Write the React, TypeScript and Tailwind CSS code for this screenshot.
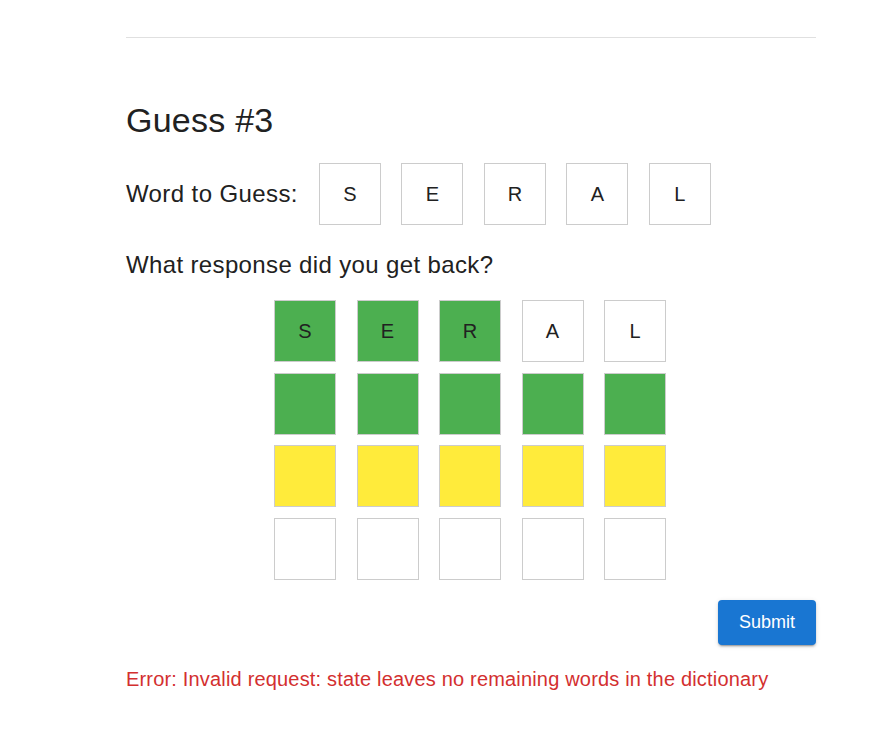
import React from "react";

const word = ["S", "E", "R", "A", "L"];

function Tile({ letter, bg }: { letter?: string; bg: string }) {
  return (
    <div
      className={`w-[62px] h-[62px] border border-[#cccccc] flex items-center justify-center text-[20px] text-[#212121] ${bg}`}
    >
      {letter}
    </div>
  );
}

export default function App() {
  return (
    <div className="w-[886px] h-[730px] bg-white font-['Liberation_Sans',Arial,sans-serif] text-[#212121]">
      <div className="ml-[126px] w-[690px] flex flex-col">
        <div className="mt-[37px] h-px bg-[#e0e0e0]" />
        <h1 className="mt-[61px] text-[34px] leading-[42px] tracking-[0.25px]">Guess #3</h1>
        <div className="mt-[22px] flex items-center h-[62px]">
          <span className="text-[24px] leading-[32px] tracking-[0.4px]">Word to Guess:</span>
          <div className="ml-[21px] flex gap-x-[20.5px]">
            {word.map((l, i) => (
              <Tile key={i} letter={l} bg="bg-white" />
            ))}
          </div>
        </div>
        <p className="mt-[24px] text-[24px] leading-[32px] tracking-[0.36px]">What response did you get back?</p>
        <div className="mt-[19px] ml-[-2px] self-center grid grid-cols-5 gap-x-[20.5px] gap-y-[10.67px]">
          {word.map((l, i) => (
            <Tile key={"a" + i} letter={l} bg={i < 3 ? "bg-[#4caf50]" : "bg-white"} />
          ))}
          {word.map((_, i) => (
            <Tile key={"b" + i} bg="bg-[#4caf50]" />
          ))}
          {word.map((_, i) => (
            <Tile key={"c" + i} bg="bg-[#ffeb3b]" />
          ))}
          {word.map((_, i) => (
            <Tile key={"d" + i} bg="bg-white" />
          ))}
        </div>
        <div className="mt-[20px] flex justify-end">
          <button className="w-[98px] h-[45px] rounded-[4px] bg-[#1976d2] text-white text-[18px] shadow-[0px_3px_1px_-2px_rgba(0,0,0,0.2),0px_2px_2px_0px_rgba(0,0,0,0.14),0px_1px_5px_0px_rgba(0,0,0,0.12)]">
            Submit
          </button>
        </div>
        <p className="mt-[20px] text-[20px] leading-[28px] tracking-[0.18px] text-[#d32f2f]">
          Error: Invalid request: state leaves no remaining words in the dictionary
        </p>
      </div>
    </div>
  );
}
